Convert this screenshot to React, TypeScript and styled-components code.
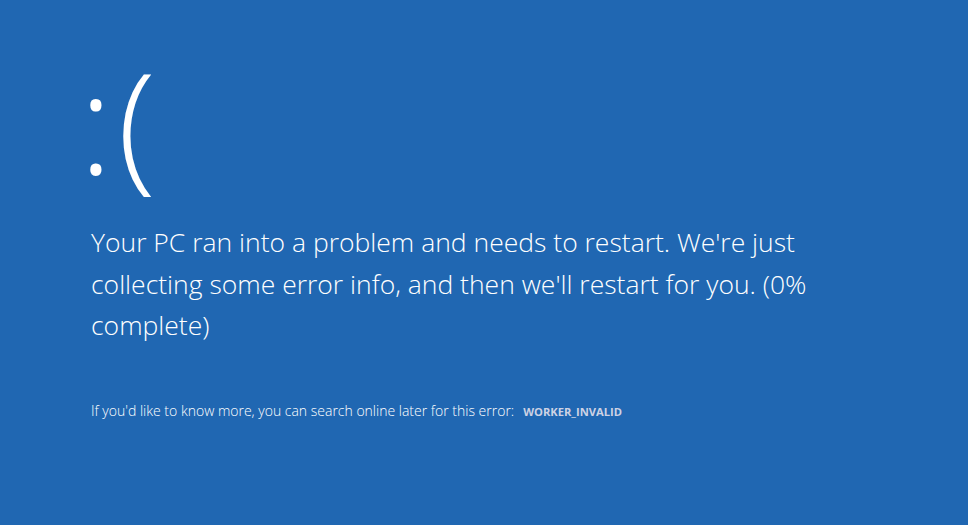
import React from "react";
import styled, { createGlobalStyle } from "styled-components";

const Global = createGlobalStyle`
  html, body { margin: 0; padding: 0; background: #2067b2; }
  body { width: 968px; height: 525px; overflow: hidden; }
`;

const Screen = styled.div`
  width: 968px;
  height: 525px;
  box-sizing: border-box;
  background: #2067b2;
  color: #ffffff;
  font-family: "Open Sans", "Noto Sans", sans-serif;
  padding: 32px 0 0 91px;
  display: flex;
  flex-direction: column;
`;

const Face = styled.div`
  font-size: 141px;
  font-weight: 300;
  line-height: 176px;
  margin: 0 0 14px -12px;
  letter-spacing: 5px;
`;

const Message = styled.p`
  margin: 0;
  font-size: 26.5px;
  font-weight: 300;
  line-height: 41.5px;
  width: 790px;
`;

const Info = styled.p`
  margin: 55px 0 0 0;
  font-size: 14px;
  font-weight: 300;
  line-height: 18px;
`;

const Code = styled.span`
  font-weight: 700;
  font-size: 11.2px;
  color: #cdd2e4;
  margin-left: 9px;
`;

export default function App() {
  return (
    <>
      <Global />
      <Screen>
        <Face>:(</Face>
        <Message>
          Your PC ran into a problem and needs to restart. We're just collecting some error info, and then we'll restart for you. (0% complete)
        </Message>
        <Info>
          If you'd like to know more, you can search online later for this error:
          <Code>WORKER_INVALID</Code>
        </Info>
      </Screen>
    </>
  );
}
